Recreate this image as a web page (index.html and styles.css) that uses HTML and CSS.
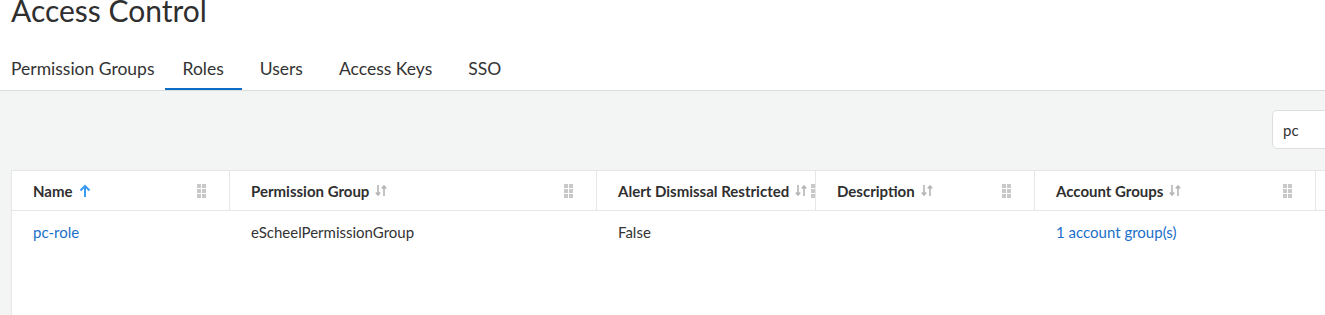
FILE: index.html
```html
<html>
<head>
    <title>Access Control</title>
    <link rel="stylesheet" href="styles.css">
</head>
<body>
    <div class="page-head">
        <h1 class="title">Access Control</h1>
        <div class="tabs">
            <a class="tab">Permission Groups</a>
            <a class="tab active">Roles</a>
            <a class="tab">Users</a>
            <a class="tab">Access Keys</a>
            <a class="tab">SSO</a>
        </div>
    </div>
    <div class="content">
        <div class="toolbar">
            <input class="search" type="text" value="pc">
        </div>
        <div class="grid">
            <div class="row head">
                <div class="cell">
                    <span class="label">Name</span>
                    <svg class="sort-on" width="12" height="14" viewBox="0 0 12 14"><path d="M6 13V2M1.5 6.5L6 2l4.5 4.5" fill="none" stroke="#3b9bf2" stroke-width="2"/></svg>
                    <span class="handle"><i></i><i></i><i></i><i></i><i></i><i></i></span>
                </div>
                <div class="cell">
                    <span class="label">Permission Group</span>
                    <svg class="sort" width="12" height="13" viewBox="0 0 12 13"><path d="M3 1v10M0.8 8.5L3 11l2.2-2.5M9 12V2M6.8 4.5L9 2l2.2 2.5" fill="none" stroke="#b5b5b5" stroke-width="1.6"/></svg>
                    <span class="handle"><i></i><i></i><i></i><i></i><i></i><i></i></span>
                </div>
                <div class="cell">
                    <span class="label">Alert Dismissal Restricted</span>
                    <svg class="sort" width="12" height="13" viewBox="0 0 12 13"><path d="M3 1v10M0.8 8.5L3 11l2.2-2.5M9 12V2M6.8 4.5L9 2l2.2 2.5" fill="none" stroke="#b5b5b5" stroke-width="1.6"/></svg>
                    <span class="handle"><i></i><i></i><i></i><i></i><i></i><i></i></span>
                </div>
                <div class="cell">
                    <span class="label">Description</span>
                    <svg class="sort" width="12" height="13" viewBox="0 0 12 13"><path d="M3 1v10M0.8 8.5L3 11l2.2-2.5M9 12V2M6.8 4.5L9 2l2.2 2.5" fill="none" stroke="#b5b5b5" stroke-width="1.6"/></svg>
                    <span class="handle"><i></i><i></i><i></i><i></i><i></i><i></i></span>
                </div>
                <div class="cell">
                    <span class="label">Account Groups</span>
                    <svg class="sort" width="12" height="13" viewBox="0 0 12 13"><path d="M3 1v10M0.8 8.5L3 11l2.2-2.5M9 12V2M6.8 4.5L9 2l2.2 2.5" fill="none" stroke="#b5b5b5" stroke-width="1.6"/></svg>
                    <span class="handle"><i></i><i></i><i></i><i></i><i></i><i></i></span>
                </div>
                <div class="cell last"></div>
            </div>
            <div class="row body">
                <div class="cell"><a class="link">pc-role</a></div>
                <div class="cell">eScheelPermissionGroup</div>
                <div class="cell">False</div>
                <div class="cell"></div>
                <div class="cell"><a class="link">1 account group(s)</a></div>
                <div class="cell last"></div>
            </div>
        </div>
    </div>
</body>
</html>
```

FILE: styles.css
```css
body {
    margin: 0;
    font-family: Lato, "Open Sans", sans-serif;
    color: #333;
    background: #fff;
    overflow: hidden;
}
.page-head {
    padding: 0 11px;
    border-bottom: 1px solid #dcdcdc;
}
.title {
    margin: -8px 0 0;
    font-size: 30px;
    font-weight: 400;
    line-height: 36px;
    color: #2f2f2f;
}
.tabs {
    display: flex;
    margin-top: 28px;
}
.tab {
    padding: 0 18px;
    font-size: 17.5px;
    line-height: 26px;
    padding-bottom: 6px;
    border-bottom: 2px solid transparent;
    color: #333;
}
.tab:first-child { padding-left: 0; padding-right: 10px; }
.tab.active { border-bottom-color: #0b6dc8; }
.content {
    background: #f3f4f4;
    padding: 19px 0 0 11px;
    height: 400px;
}
.toolbar {
    display: flex;
    justify-content: flex-end;
}
.search {
    width: 70px;
    height: 39px;
    margin-right: -17px;
    padding: 0 10px;
    border: 1px solid #dedede;
    border-radius: 5px;
    font-family: Lato, sans-serif;
    font-size: 15px;
    color: #333;
    background: #fff;
}
.grid {
    margin-top: 21px;
    background: #fff;
    border-left: 1px solid #e6e6e6;
    border-top: 1px solid #e6e6e6;
    height: 300px;
    width: 1400px;
}
.row {
    display: grid;
    grid-template-columns: 218px 367px 219px 219px 281px 1fr;
}
.row.head {
    height: 39px;
    border-bottom: 1px solid #e6e6e6;
}
.cell {
    display: flex;
    align-items: center;
    padding: 0 0 0 21px;
    overflow: hidden;
    white-space: nowrap;
    font-size: 15px;
}
.head .cell {
    border-right: 1px solid #e6e6e6;
    padding-right: 23px;
    font-weight: 700;
    color: #2f2f2f;
}
.label { flex-shrink: 0; }
.sort, .sort-on { flex-shrink: 0; margin-left: 6px; }
.handle {
    flex-shrink: 0;
    margin-left: auto;
    display: grid;
    grid-template-columns: 4px 4px;
    grid-auto-rows: 4px;
    gap: 1px;
    padding-left: 4px;
}
.handle i { background: #c8c8c8; }
.row.body { height: 42px; }
.link { color: #1a6fc9; }
```
